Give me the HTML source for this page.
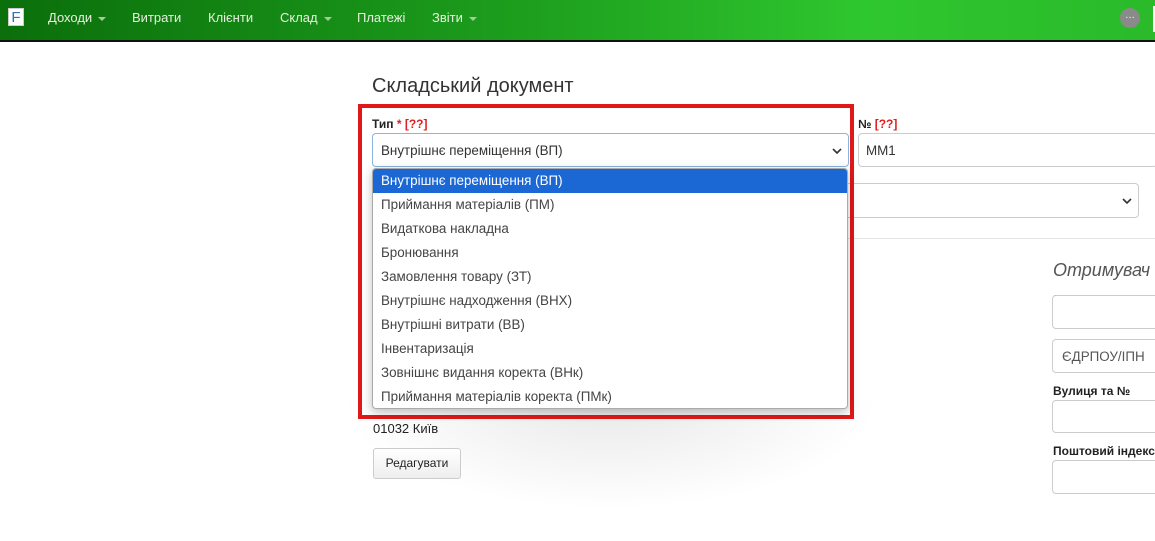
<!DOCTYPE html>
<html><head><meta charset="utf-8"><style>
*{box-sizing:border-box}
body{margin:0;width:1155px;height:541px;overflow:hidden;background:#fff;font-family:"Liberation Sans",sans-serif;position:relative;font-size:13px;color:#222}
.nav{position:absolute;left:0;top:0;width:1155px;height:42px;background:linear-gradient(90deg,#0b6f0b 0%,#1d9e1d 45%,#2fc72f 75%,#2aba2a 100%);border-bottom:2px solid #111}
.nav span{position:absolute;top:10px;color:#e8f0e0;font-size:13px}
.car{display:inline-block;width:0;height:0;border-left:4px solid transparent;border-right:4px solid transparent;border-top:4px solid #a9c9a0;margin-left:6px;vertical-align:middle}
.abs{position:absolute}
.inp{position:absolute;border:1px solid #ccc;border-radius:4px;background:#fff}
.dd{font-family:"Liberation Sans",sans-serif;font-size:13.4px;color:#444}
.it{position:absolute;left:8px;height:24px;line-height:24px}
</style></head><body>
<div class="nav">
<div class="abs" style="left:8px;top:8px;width:16px;height:18px;background:#fff;border:1px solid #ccc;color:#2a6fc0;font-size:15px;line-height:17px;text-align:center">F</div>
<span style="left:48px">Доходи<i class="car"></i></span>
<span style="left:132px">Витрати</span>
<span style="left:208px">Клієнти</span>
<span style="left:280px">Склад<i class="car"></i></span>
<span style="left:357px">Платежі</span>
<span style="left:432px">Звіти<i class="car"></i></span>
<div class="abs" style="left:1120px;top:8px;width:20px;height:20px;border-radius:50%;background:#8a8a8a;color:#fff;font-size:10px;line-height:16px;text-align:center">…</div>
<div class="abs" style="left:1153px;top:6px;width:2px;height:26px;background:#fff"></div>
</div>
<div class="abs" style="left:372px;top:75px;font-size:20px;color:#333">Складський документ</div>
<div class="abs" style="left:372px;top:117px;font-weight:bold;font-size:12px">Тип <span style="color:#e02020">* [??]</span></div>
<div class="abs" style="left:858px;top:117px;font-weight:bold;font-size:12px">№ <span style="color:#e02020">[??]</span></div>
<div class="inp dd" style="left:372px;top:133px;width:477px;height:34px;border-color:#8ab4e0;line-height:34px;padding-left:8px;color:#333">Внутрішнє переміщення (ВП)
<svg class="abs" style="right:6px;top:13px" width="10" height="8" viewBox="0 0 10 8"><path d="M1 2l4 4 4-4" stroke="#333" stroke-width="1.6" fill="none"/></svg></div>
<div class="inp dd" style="left:858px;top:133px;width:300px;height:34px;line-height:34px;padding-left:7px;color:#333">MM1</div>
<div class="inp" style="left:840px;top:183px;width:299px;height:35px"><svg class="abs" style="right:6px;top:13px" width="10" height="8" viewBox="0 0 10 8"><path d="M1 2l4 4 4-4" stroke="#333" stroke-width="1.6" fill="none"/></svg></div>
<div class="abs" style="left:372px;top:238px;width:783px;height:1px;background:#e5e5e5"></div>
<div class="abs" style="left:340px;top:400px;width:540px;height:110px;background:radial-gradient(ellipse at 50% 0%,rgba(0,0,0,.09),rgba(0,0,0,0) 70%)"></div>
<div class="abs" style="left:373px;top:421px;font-size:13px">01032 Київ</div>
<div class="abs" style="left:373px;top:448px;width:88px;height:31px;border:1px solid #ccc;border-radius:3px;background:linear-gradient(#fff,#eee);font-size:12px;text-align:center;line-height:29px">Редагувати</div>
<div class="abs" style="left:1053px;top:260px;font-size:18px;font-style:italic;color:#555">Отримувач <span style="color:#e0a020">.</span></div>
<div class="inp" style="left:1052px;top:295px;width:110px;height:34px"></div>
<div class="inp dd" style="left:1052px;top:339px;width:110px;height:34px;color:#555;line-height:34px;padding-left:9px">ЄДРПОУ/ІПН</div>
<div class="abs" style="left:1053px;top:384px;font-weight:bold;font-size:12px">Вулиця та №</div>
<div class="inp" style="left:1052px;top:400px;width:110px;height:33px"></div>
<div class="abs" style="left:1053px;top:444px;font-weight:bold;font-size:12px">Поштовий індекс</div>
<div class="inp" style="left:1052px;top:460px;width:110px;height:34px"></div>
<div class="abs" style="left:358px;top:104px;width:496px;height:315px;border:4px solid #e01818"></div>
<div class="abs dd" style="left:372px;top:168px;width:476px;height:241px;background:#fff;border:1px solid #aaa;border-radius:4px;box-shadow:0 3px 10px rgba(0,0,0,.25);overflow:hidden">
<div class="abs" style="left:0;top:0;width:476px;height:24px;background:#1b68d4"></div>
<div class="it" style="top:0;color:#fff">Внутрішнє переміщення (ВП)</div>
<div class="it" style="top:24px">Приймання матеріалів (ПМ)</div>
<div class="it" style="top:48px">Видаткова накладна</div>
<div class="it" style="top:72px">Бронювання</div>
<div class="it" style="top:96px">Замовлення товару (ЗТ)</div>
<div class="it" style="top:120px">Внутрішнє надходження (ВНХ)</div>
<div class="it" style="top:144px">Внутрішні витрати (ВВ)</div>
<div class="it" style="top:168px">Інвентаризація</div>
<div class="it" style="top:192px">Зовнішнє видання коректа (ВНк)</div>
<div class="it" style="top:216px">Приймання матеріалів коректа (ПМк)</div>
</div>
</body></html>
